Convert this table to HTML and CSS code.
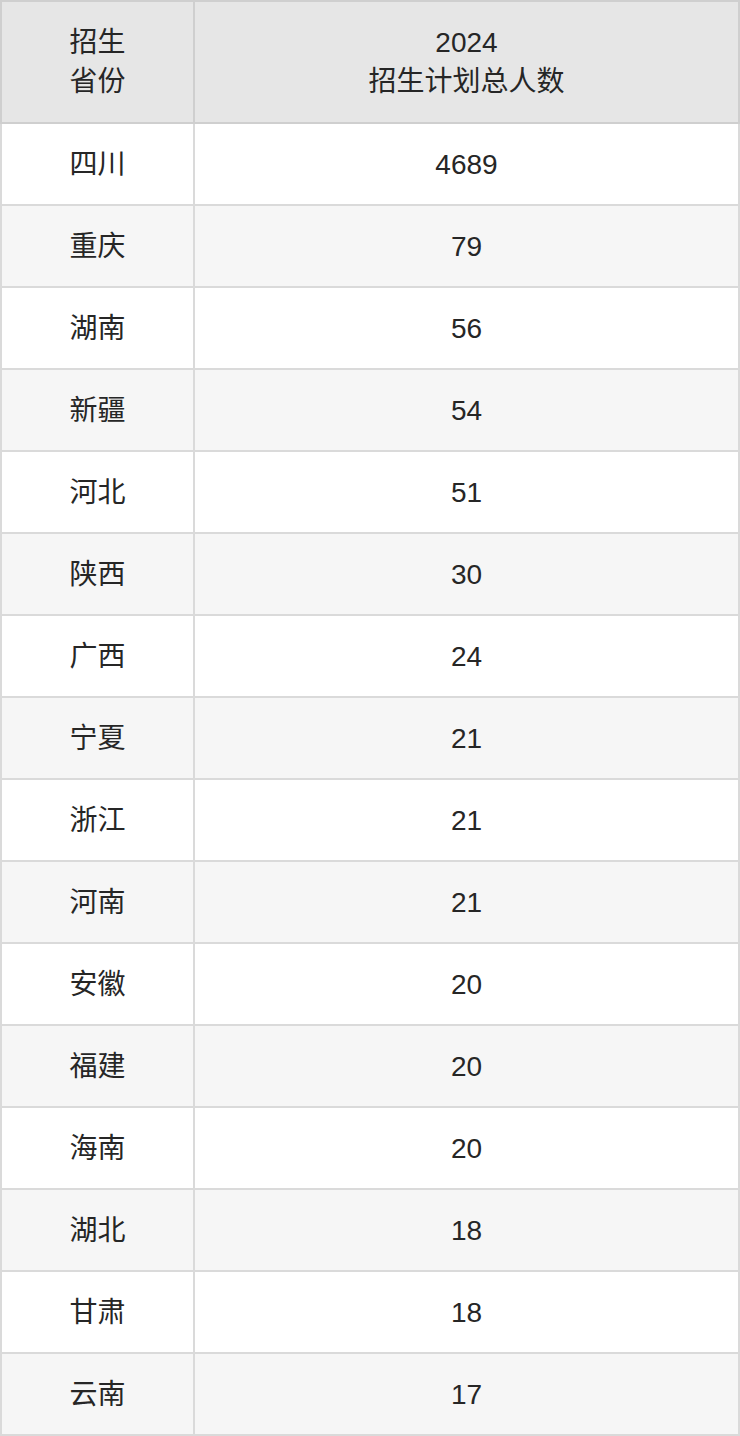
FILE: index.html
```html
<!DOCTYPE html>
<html lang="zh">
<head>
<meta charset="utf-8">
<link rel="stylesheet" href="styles.css">
</head>
<body>
<table class="plan">
  <colgroup><col class="c-prov"><col class="c-num"></colgroup>
  <thead>
    <tr><th>招生<br>省份</th><th>2024<br>招生计划总人数</th></tr>
  </thead>
  <tbody>
    <tr><td>四川</td><td>4689</td></tr>
    <tr><td>重庆</td><td>79</td></tr>
    <tr><td>湖南</td><td>56</td></tr>
    <tr><td>新疆</td><td>54</td></tr>
    <tr><td>河北</td><td>51</td></tr>
    <tr><td>陕西</td><td>30</td></tr>
    <tr><td>广西</td><td>24</td></tr>
    <tr><td>宁夏</td><td>21</td></tr>
    <tr><td>浙江</td><td>21</td></tr>
    <tr><td>河南</td><td>21</td></tr>
    <tr><td>安徽</td><td>20</td></tr>
    <tr><td>福建</td><td>20</td></tr>
    <tr><td>海南</td><td>20</td></tr>
    <tr><td>湖北</td><td>18</td></tr>
    <tr><td>甘肃</td><td>18</td></tr>
    <tr><td>云南</td><td>17</td></tr>
  </tbody>
</table>
</body>
</html>
```
FILE: styles.css
```css
html, body { margin: 0; padding: 0; background: #fff; }
.plan {
  width: 740px;
  border-collapse: collapse;
  table-layout: fixed;
  font-family: "Liberation Sans", "Noto Sans CJK SC", sans-serif;
  font-size: 28px;
  line-height: 39px;
  color: #262626;
}
.c-prov { width: 193px; }
.plan th, .plan td {
  border: 2px solid #dadada;
  text-align: center;
  vertical-align: middle;
  padding: 0;
  font-weight: normal;
}
.plan th {
  background: #e6e6e6;
  border-color: #cfcfcf;
  height: 120px;
}
.plan td { height: 80px; }
.plan tbody tr:nth-child(even) td { background: #f6f6f6; }
```
